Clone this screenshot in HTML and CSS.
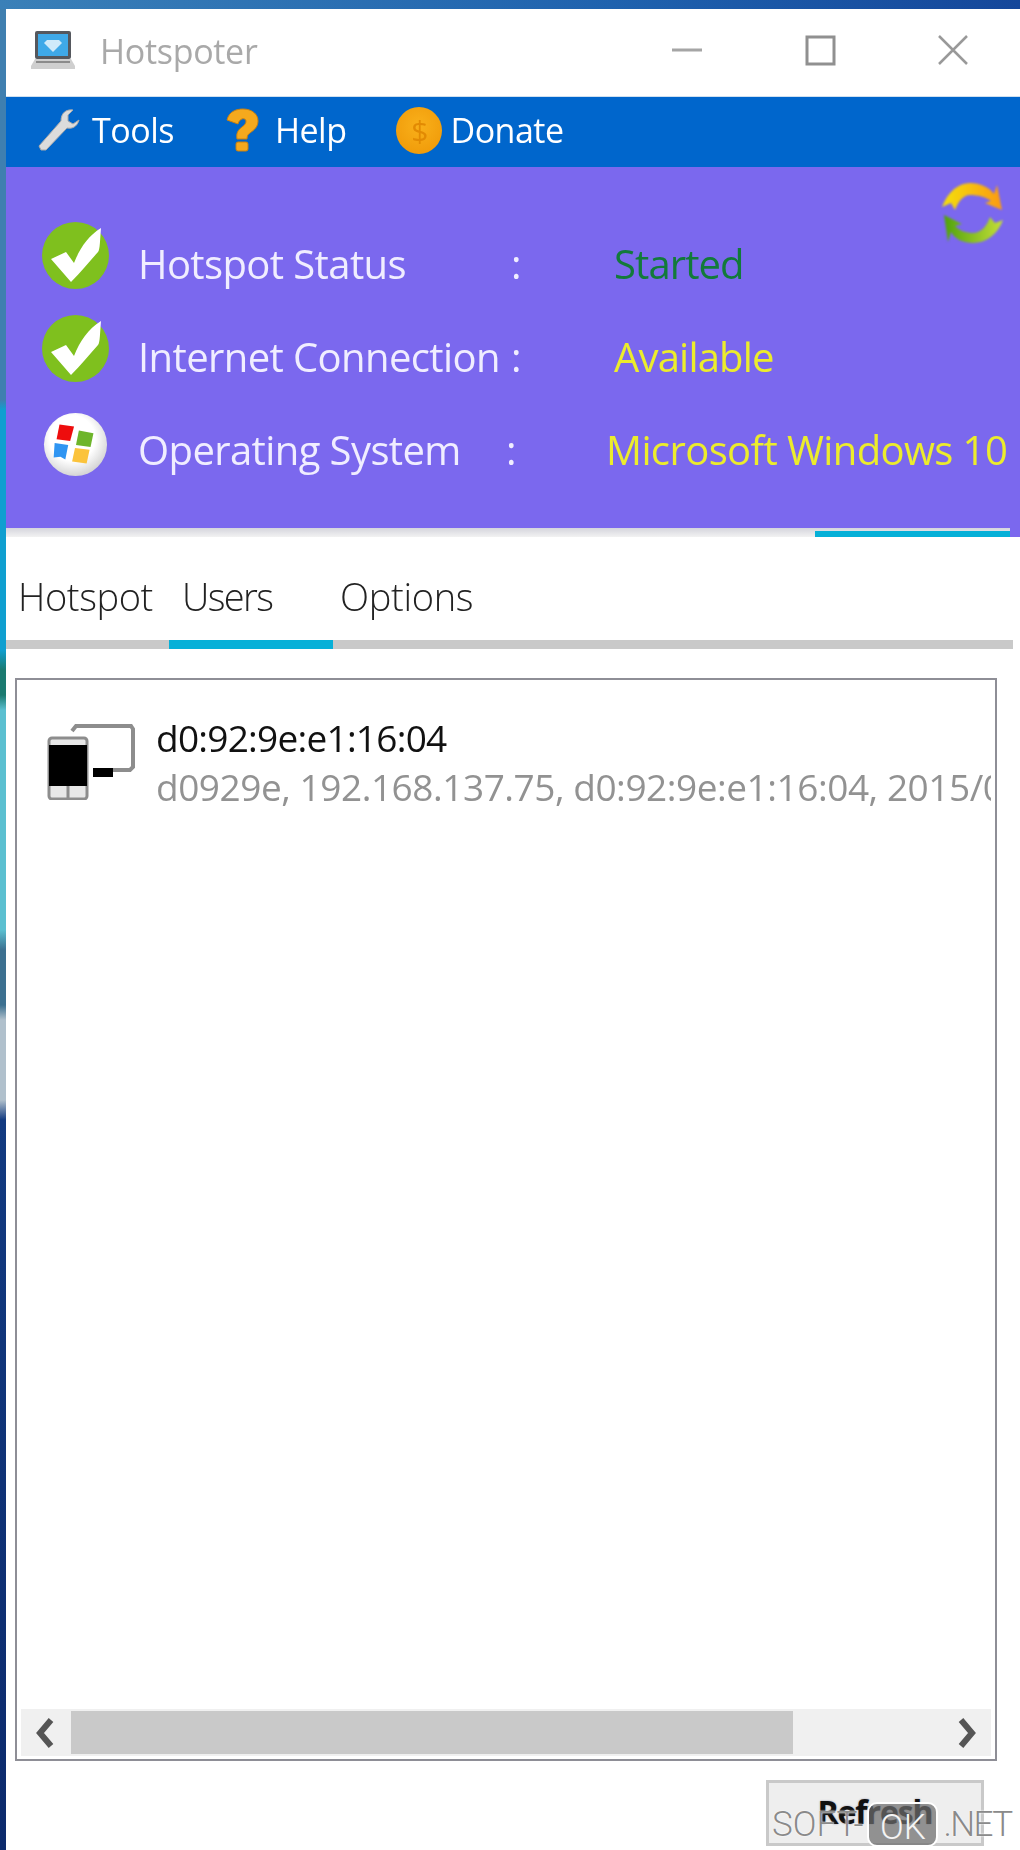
FILE: index.html
```html
<!DOCTYPE html>
<html lang="en">
<head>
<meta charset="utf-8">
<title>Hotspoter</title>
<link rel="stylesheet" href="styles.css">
</head>
<body>
<div class="window">
  <header class="titlebar">
    <svg class="app-icon" viewBox="0 0 46 40"><rect x="5" y="1" width="36" height="28" rx="2" fill="#55585e"/><rect x="8" y="4" width="30" height="22" fill="#3fa9e8"/><path d="M17 10h12l3 3-9 9-9-9z" fill="#cfeafa"/><path d="M5 29h36l4 7v3H1v-3z" fill="#cfcfcf"/><rect x="6" y="31" width="34" height="2" fill="#8b8b8b"/></svg>
    <span class="app-name">Hotspoter</span>
    <div class="controls">
      <svg class="ctl" viewBox="0 0 32 32"><path d="M1 16h30" stroke="#a5a5a5" stroke-width="3"/></svg>
      <svg class="ctl" viewBox="0 0 32 32"><rect x="3" y="3" width="27" height="27" fill="none" stroke="#909090" stroke-width="3"/></svg>
      <svg class="ctl" viewBox="0 0 32 32"><path d="M2 2l28 28M30 2L2 30" stroke="#999" stroke-width="2.5"/></svg>
    </div>
  </header>
  <nav class="menubar">
    <div class="menu-item tools">
      <svg class="ic-wrench" viewBox="0 0 44 44"><path d="M2 38l2 4 5 0 21-22c5 1 10-1 12-8l-6 4-5-3 0-6 5-5c-7-1-12 3-12 11z" fill="#dcdcdc" stroke="#aaa" stroke-width="1"/></svg>
      <span>Tools</span>
    </div>
    <div class="menu-item help">
      <svg class="ic-help" viewBox="0 0 36 44"><path d="M3 12C5 3 13 1 19 1c9 0 15 5 15 12 0 6-4 9-8 12-2 1-3 3-3 6H13c-1-6 1-9 5-12 3-2 4-4 4-6 0-3-6-4-8 3z" fill="#f5a91d" stroke="#c9800f" stroke-width="1"/><rect x="12" y="34" width="12" height="9" rx="2" fill="#f5a91d" stroke="#c9800f"/></svg>
      <span>Help</span>
    </div>
    <div class="menu-item donate">
      <span class="coin">$</span>
      <span>Donate</span>
    </div>
  </nav>
  <section class="status">
    <svg class="ic-refresh" viewBox="0 0 62 64">
      <defs>
        <linearGradient id="gy" x1="0" x2="1"><stop offset="0" stop-color="#f4e00c"/><stop offset="1" stop-color="#fb9a12"/></linearGradient>
        <linearGradient id="gg" x1="0" x2="1"><stop offset="0" stop-color="#4fa20c"/><stop offset="1" stop-color="#c6df38"/></linearGradient>
      </defs>
      <path d="M0 25C6 9 17 1 28 1C38 1 47 5 52 12L55 3L60 28L43 21L49 19C44 15 36 13 28 13C21 13 16 20 13 28L9 21Z" fill="url(#gy)"/>
      <path d="M61 38C56 52 44 61 31 61C21 61 13 57 9 50L6 60L2 33L20 42L13 44C18 49 24 51 31 51C39 51 45 44 48 35L53 41Z" fill="url(#gg)"/>
    </svg>
    <div class="status-row">
      <svg class="ic-state" viewBox="0 0 67 67"><circle cx="33.500" cy="33.500" r="33.500" fill="#7fc01e"/><path d="M9 37l15-7 8 11C38 26 46 14 59 6c-1 12-1 22-3 24C47 40 39 50 29 60z" fill="#fff"/></svg>
      <span class="s-label">Hotspot Status</span><span class="s-colon">:</span><span class="s-value started">Started</span>
    </div>
    <div class="status-row">
      <svg class="ic-state" viewBox="0 0 67 67"><circle cx="33.500" cy="33.500" r="33.500" fill="#7fc01e"/><path d="M9 37l15-7 8 11C38 26 46 14 59 6c-1 12-1 22-3 24C47 40 39 50 29 60z" fill="#fff"/></svg>
      <span class="s-label">Internet Connection</span><span class="s-colon">:</span><span class="s-value avail">Available</span>
    </div>
    <div class="status-row">
      <svg class="ic-state ic-os" viewBox="0 0 67 67">
        <defs><radialGradient id="gw" cx=".45" cy=".4" r=".6"><stop offset=".6" stop-color="#fff"/><stop offset="1" stop-color="#d5d5d5"/></radialGradient></defs>
        <circle cx="33.500" cy="33.500" r="32.500" fill="url(#gw)"/>
        <path d="M17 13l15 2-4 15-14-2z" fill="#ee0d0d"/><path d="M37 19l15 3-3 14-15-2z" fill="#6eb52b"/><path d="M12 32l14 2-3 15-5-3-7 1z" fill="#2f95f2"/><path d="M33 37l15 2-3 14-15-2z" fill="#fbc33b"/>
      </svg>
      <span class="s-label">Operating System</span><span class="s-colon c3">:</span><span class="s-value os">Microsoft Windows 10</span>
    </div>
  </section>
  <div class="progress-wrap"><div class="progress"><div class="progress-bar"></div></div></div>
  <div class="tabs">
    <span class="tab t1">Hotspot</span><span class="tab t2 active">Users</span><span class="tab t3">Options</span>
  </div>
  <div class="pane">
    <div class="listbox">
      <div class="list-body">
        <div class="list-item">
          <svg class="ic-device" viewBox="0 0 88 80"><path d="M25 11 29 6H84l2 3V47l-3 3H47" fill="none" stroke="#8d8d8d" stroke-width="4"/><rect x="46" y="48" width="20" height="9" fill="#000"/><rect x="2" y="18" width="38" height="61" rx="3" fill="#e8e8e8" stroke="#8d8d8d" stroke-width="3"/><rect x="2" y="25" width="38" height="41" fill="#000"/><path d="M21 66v13" stroke="#8d8d8d" stroke-width="3"/></svg>
          <div class="item-text">
            <div class="item-title">d0:92:9e:e1:16:04</div>
            <div class="item-sub">d0929e, 192.168.137.75, d0:92:9e:e1:16:04, 2015/0</div>
          </div>
        </div>
      </div>
      <div class="scrollbar">
        <svg class="arrow" viewBox="0 0 20 32"><path d="M16 3 5 16l11 13" fill="none" stroke="#555" stroke-width="6"/></svg>
        <div class="track"><div class="thumb"></div></div>
        <svg class="arrow" viewBox="0 0 20 32"><path d="M4 3l11 13L4 29" fill="none" stroke="#555" stroke-width="6"/></svg>
      </div>
    </div>
    <div class="actions"><button class="refresh" type="button">Refresh</button></div>
  </div>
</div>
<div class="watermark"><span>SOFT-</span><span class="wm-ok">OK</span><span class="wm-net">.NET</span></div>
</body>
</html>
```

FILE: styles.css
```css
* { box-sizing: border-box; }
html, body { margin: 0; height: 100%; }
body {
  width: 1020px;
  height: 1850px;
  overflow: hidden;
  padding: 9px 0 0 6px;
  font-family: "Open Sans", "Liberation Sans", sans-serif;
  background:
    linear-gradient(90deg, #3a80b8 0, #1f62ae 60%, #15479a 100%) top / 100% 9px no-repeat,
    linear-gradient(180deg, #3f7fb0 0, #3f7fb0 400px, #0f9fd0 410px, #0f9fd0 650px, #1a7a70 670px, #1a7a70 695px, #5bbfd0 710px, #5bbfd0 930px, #3c7090 950px, #3c7090 1005px, #b0c0cc 1020px, #b0c0cc 1100px, #123a80 1120px, #0c2a6c 1850px);
  position: relative;
}
.window { width: 1014px; height: 1841px; background: #fff; display: flex; flex-direction: column; }

.titlebar { height: 88px; display: flex; align-items: center; padding: 0 0 1px 24px; border-bottom: 1px solid #cfe0f0; }
.titlebar > * { filter: blur(.6px); }
.app-icon { width: 46px; height: 40px; margin-top: -4px; }
.app-name { margin-left: 24px; margin-top: -2px; font-size: 34px; color: #a9a9a9; letter-spacing: -.3px; }
.controls { margin-left: auto; display: flex; margin-top: -4px; margin-right: 51px; gap: 101px; }
.ctl { width: 32px; height: 32px; }

.menubar { height: 70px; background: #0066cc; display: flex; align-items: center; color: #fff; font-size: 34px; letter-spacing: -.5px; padding-bottom: 4px; }
.menubar > * { filter: blur(.6px); }
.menu-item { display: flex; align-items: center; }
.tools { margin-left: 31px; gap: 11px; }
.ic-wrench { width: 44px; height: 44px; }
.help { margin-left: 50px; gap: 15px; }
.ic-help { width: 36px; height: 44px; }
.donate { margin-left: 50px; gap: 8px; }
.coin { width: 46px; height: 47px; border-radius: 50%; background: radial-gradient(circle at 50% 40%, #f9b01a, #ee9606); color: #e28a03; display: flex; align-items: center; justify-content: center; font-size: 30px; }

.status { height: 361px; background: #7b68ee; padding: 55px 0 0 36px; position: relative; display: flex; flex-direction: column; gap: 26px; }
.ic-refresh { position: absolute; left: 936px; top: 15px; width: 62px; height: 64px; filter: blur(1px); }
.status-row { display: flex; align-items: center; height: 67px; font-size: 40px; color: #f0edff; letter-spacing: -.6px; white-space: nowrap; }
.status-row > * { filter: blur(.6px); }
.ic-state { width: 67px; height: 67px; flex: none; }
.ic-os { width: 65px; height: 65px; margin: 6px 1px 0 1px; }
.s-label { margin-left: 29px; width: 373px; line-height: 67px; margin-top: 15px; }
.s-colon { width: 103px; margin-top: 15px; }
.s-value { margin-top: 15px; }
.started { color: #127a3a; letter-spacing: -.9px; }
.avail, .os { color: #ecec2c; }
.avail { letter-spacing: -.8px; }
.os { margin-left: -8px; }
.c3 { margin-left: -5px; width: 108px; }

.progress-wrap { height: 9px; background: #7b68ee; }
.progress { width: 1004px; height: 9px; background: linear-gradient(180deg, #d5d5dd, #f2f2f2); display: flex; justify-content: flex-end; align-items: flex-end; }
.progress-bar { width: 195px; height: 6px; background: #06b0d8; }

.tabs { height: 112px; width: 1007px; border-bottom: 9px solid #c9c9c9; display: flex; font-size: 38px; font-weight: 300; color: #222; filter: blur(.4px); }
.tab { display: block; height: 112px; padding-top: 33px; }
.tab.active { border-bottom: 9px solid #06b0d8; }
.t1 { width: 163px; padding-left: 12px; letter-spacing: -.4px; }
.t2 { width: 164px; padding-left: 13px; letter-spacing: -1.6px; }
.t3 { padding-left: 7px; letter-spacing: -.3px; }

.pane { padding: 29px 0 0 9px; flex: 1; display: flex; flex-direction: column; }
.listbox { width: 982px; height: 1083px; border: 2px solid #8e8e96; display: flex; flex-direction: column; padding: 0 4px 3px; }
.list-body { flex: 1; overflow: hidden; }
.list-item { display: flex; padding: 40px 0 0 26px; }
.ic-device { width: 88px; height: 80px; flex: none; filter: blur(.7px); }
.item-text { margin-left: 21px; white-space: nowrap; filter: blur(.5px); }
.item-title { font-size: 37px; color: #111; letter-spacing: -.75px; line-height: 44px; margin-top: -4px; }
.item-sub { font-size: 37px; color: #929292; letter-spacing: -.46px; line-height: 54px; }
.scrollbar { height: 47px; background: #f0f0f0; display: flex; align-items: center; }
.arrow { width: 20px; height: 32px; flex: none; margin: 0 14px 0 16px; }
.arrow:first-child { margin: 0 16px 0 14px; }
.track { flex: 1; height: 43px; }
.thumb { width: 722px; height: 43px; background: #c9c9c9; }

.actions { display: flex; justify-content: flex-end; padding: 19px 36px 0 0; }
.refresh { width: 218px; height: 66px; background: #eee; border: 3px solid #c9c9c9; padding: 0 0 4px; font: 700 32px "Open Sans", sans-serif; color: #111; letter-spacing: -1.1px; text-shadow: 0 0 2px rgba(0, 0, 60, .4); }

.watermark { position: absolute; left: 772px; top: 1802px; height: 45px; display: flex; align-items: center; gap: 4px; font: 300 35px Roboto, "Liberation Sans", sans-serif; color: #8a8a8a; white-space: nowrap; text-shadow: 0 0 2px #fff, 0 0 1px #fff; }
.wm-ok { width: 71px; height: 45px; line-height: 47px; background: rgba(110, 110, 110, .72); border: 2px solid #fff; border-radius: 10px; text-align: center; color: #f4f4f4; text-shadow: none; }
.wm-net { margin-left: 1px; letter-spacing: -1.6px; }
```
